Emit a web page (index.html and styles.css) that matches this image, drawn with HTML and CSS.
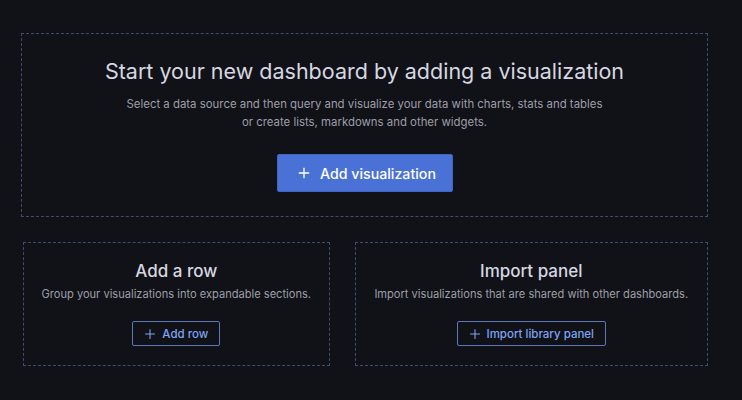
FILE: index.html
```html
<!DOCTYPE html>
<html>
<head>
<meta charset="utf-8">
<link rel="stylesheet" href="styles.css">
</head>
<body>
<div class="page">
  <section class="hero">
    <h1 class="hero-title">Start your new dashboard by adding a visualization</h1>
    <p class="hero-desc">Select a data source and then query and visualize your data with charts, stats and tables<br>or create lists, markdowns and other widgets.</p>
    <button class="btn-primary"><svg class="plus" viewBox="0 0 16 16" width="14" height="14"><path d="M8 2v12M2 8h12" stroke="currentColor" stroke-width="1.5" fill="none"/></svg><span>Add visualization</span></button>
  </section>
  <div class="row">
    <section class="card card-row">
      <h2 class="card-title">Add a row</h2>
      <p class="card-desc">Group your visualizations into expandable sections.</p>
      <button class="btn-outline"><svg class="plus-sm" viewBox="0 0 16 16" width="12" height="12"><path d="M8 1.5v13M1.5 8h13" stroke="currentColor" stroke-width="1.4" fill="none"/></svg><span>Add row</span></button>
    </section>
    <section class="card card-import">
      <h2 class="card-title">Import panel</h2>
      <p class="card-desc">Import visualizations that are shared with other dashboards.</p>
      <button class="btn-outline"><svg class="plus-sm" viewBox="0 0 16 16" width="12" height="12"><path d="M8 1.5v13M1.5 8h13" stroke="currentColor" stroke-width="1.4" fill="none"/></svg><span>Import library panel</span></button>
    </section>
  </div>
</div>
</body>
</html>
```
FILE: styles.css
```css
html, body {
  margin: 0;
  padding: 0;
  background: #111217;
  font-family: Inter, "Noto Sans", sans-serif;
  color: #d8d9e1;
}
.page {
  padding: 33px 34px 0 21px;
  display: flex;
  flex-direction: column;
  gap: 25px;
}
.hero {
  border: 1px dashed #3d4c75;
  height: 184px;
  box-sizing: border-box;
  display: flex;
  flex-direction: column;
  align-items: center;
  padding-top: 23px;
}
.hero-title {
  margin: 0;
  font-size: 21.5px;
  line-height: 28px;
  font-weight: 400;
  color: #d6d7e2;
}
.hero-desc {
  margin: 10px 0 0;
  font-size: 11.4px;
  line-height: 18px;
  color: #9d9ea8;
  text-align: center;
}
.btn-primary {
  margin-top: 23px;
  height: 38px;
  width: 176px;
  background: #4a72d6;
  border: 1px solid #3f64c4;
  border-radius: 2px;
  color: #ffffff;
  font-family: inherit;
  font-size: 14.2px;
  font-weight: 500;
  display: flex;
  align-items: center;
  justify-content: center;
  gap: 9px;
  padding: 0 0 0 4px;
}
.row {
  display: flex;
  gap: 25px;
  padding-left: 2px;
}
.card {
  border: 1px dashed #3d4c75;
  height: 124px;
  box-sizing: border-box;
  display: flex;
  flex-direction: column;
  align-items: center;
  padding-top: 15px;
}
.card-row { width: 307px; }
.card-import { width: 354px; }
.card-title {
  margin: 0;
  font-size: 17px;
  line-height: 26px;
  font-weight: 500;
  color: #d6d7e2;
}
.card-desc {
  margin: 2px 0 0;
  font-size: 11.1px;
  line-height: 16px;
  color: #9d9ea8;
}
.btn-outline {
  margin-top: 19px;
  height: 25px;
  background: transparent;
  border: 1px solid #5d77b8;
  border-radius: 2px;
  color: #7ea3f4;
  font-family: inherit;
  font-size: 11.5px;
  font-weight: 500;
  display: flex;
  align-items: center;
  gap: 6px;
  padding: 0 11px 0 11px;
}
```
